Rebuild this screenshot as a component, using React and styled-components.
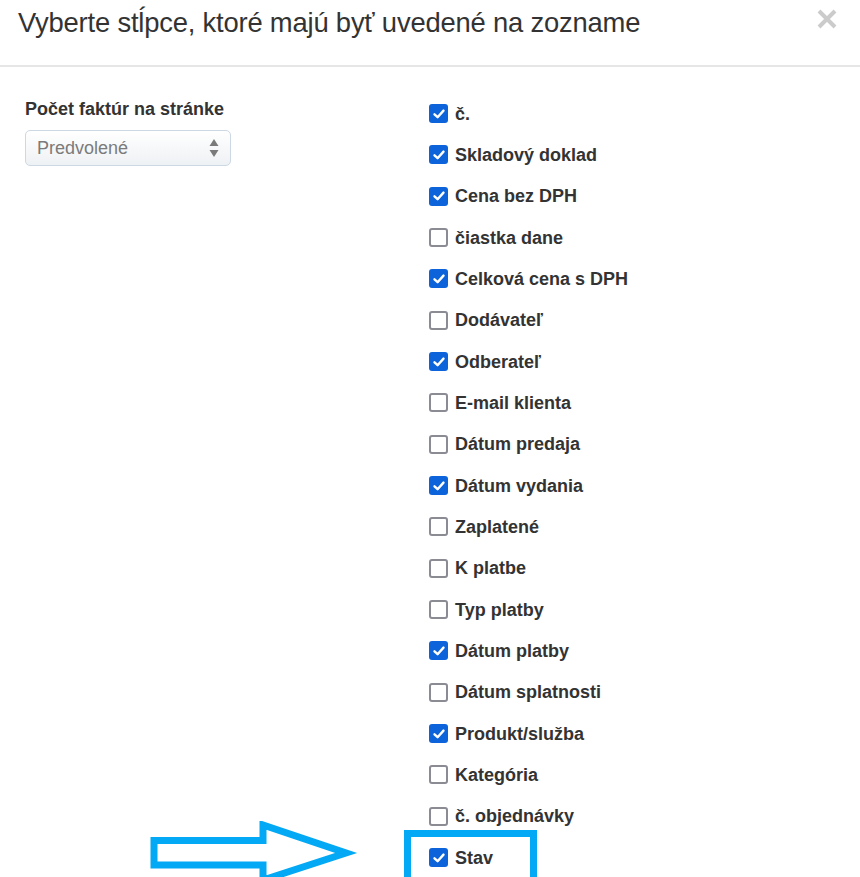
import styled, { createGlobalStyle } from 'styled-components';

const columns = [
  { label: 'č.', checked: true },
  { label: 'Skladový doklad', checked: true },
  { label: 'Cena bez DPH', checked: true },
  { label: 'čiastka dane', checked: false },
  { label: 'Celková cena s DPH', checked: true },
  { label: 'Dodávateľ', checked: false },
  { label: 'Odberateľ', checked: true },
  { label: 'E-mail klienta', checked: false },
  { label: 'Dátum predaja', checked: false },
  { label: 'Dátum vydania', checked: true },
  { label: 'Zaplatené', checked: false },
  { label: 'K platbe', checked: false },
  { label: 'Typ platby', checked: false },
  { label: 'Dátum platby', checked: true },
  { label: 'Dátum splatnosti', checked: false },
  { label: 'Produkt/služba', checked: true },
  { label: 'Kategória', checked: false },
  { label: 'č. objednávky', checked: false },
  { label: 'Stav', checked: true, highlight: true },
];

function Check({ checked }) {
  return (
    <Box $checked={checked}>
      {checked && (
        <svg width="14" height="14" viewBox="0 0 14 14">
          <path d="M2.5 7.3 L5.6 10.2 L11.5 3.6" fill="none" stroke="#fff" strokeWidth="2.4" strokeLinecap="round" strokeLinejoin="round" />
        </svg>
      )}
    </Box>
  );
}

function Arrow() {
  return (
    <ArrowSvg width="210" height="62" viewBox="0 0 210 62">
      <polygon
        points="4,19.5 113,19.5 113,4 196,32 113,59 113,44 4,44"
        fill="#fff"
        stroke="#03a9f4"
        strokeWidth="7"
      />
    </ArrowSvg>
  );
}

function App() {
  return (
    <>
      <GlobalStyle />
      <Modal>
        <Header>
          <Title>Vyberte stĺpce, ktoré majú byť uvedené na zozname</Title>
          <Close aria-label="close">
            <svg width="20" height="20" viewBox="0 0 20 20">
              <path d="M2 2 L18 18 M18 2 L2 18" stroke="#cbcbcb" strokeWidth="4" />
            </svg>
          </Close>
        </Header>
        <Body>
          <Side>
            <FieldLabel>Počet faktúr na stránke</FieldLabel>
            <Select>
              <span>Predvolené</span>
              <Carets>
                <svg width="10" height="20" viewBox="0 0 10 20">
                  <polygon points="5,1 9.5,8 0.5,8" fill="#7a7a7a" />
                  <polygon points="0.5,12 9.5,12 5,19" fill="#7a7a7a" />
                </svg>
              </Carets>
            </Select>
          </Side>
          <List>
            {columns.map((c) =>
              c.highlight ? (
                <Highlight key={c.label}>
                  <Arrow />
                  <Row>
                    <Check checked={c.checked} />
                    <Label>{c.label}</Label>
                  </Row>
                </Highlight>
              ) : (
                <Row key={c.label}>
                  <Check checked={c.checked} />
                  <Label>{c.label}</Label>
                </Row>
              )
            )}
          </List>
        </Body>
      </Modal>
    </>
  );
}

export default App;

const GlobalStyle = createGlobalStyle`
  html, body {
    margin: 0;
    padding: 0;
    background: #fff;
    overflow: hidden;
  }
  body {
    font-family: "Liberation Sans", Arial, sans-serif;
    color: #333;
  }
`;

const Modal = styled.div`
  width: 860px;
  height: 877px;
  overflow: hidden;
  background: #fff;
`;

const Header = styled.div`
  display: flex;
  justify-content: space-between;
  align-items: flex-start;
  height: 65px;
  padding: 0 23px 0 18px;
  border-bottom: 2px solid #e6e6e6;
`;

const Title = styled.h4`
  margin: 6px 0 0;
  font-size: 27.4px;
  font-weight: normal;
  line-height: 34px;
  color: #333;
  letter-spacing: -0.2px;
`;

const Close = styled.div`
  margin-top: 9px;
  width: 20px;
  height: 20px;
`;

const Body = styled.div`
  display: flex;
  padding: 31px 0 0 25px;
`;

const Side = styled.div`
  width: 404px;
  display: flex;
  flex-direction: column;
`;

const FieldLabel = styled.label`
  font-size: 18px;
  font-weight: bold;
  line-height: 22px;
  color: #333;
  margin-bottom: 10px;
`;

const Select = styled.div`
  box-sizing: border-box;
  width: 206px;
  height: 36px;
  display: flex;
  align-items: center;
  justify-content: space-between;
  padding: 0 11px 0 11px;
  border: 1px solid #ccd8e4;
  border-radius: 5px;
  background: linear-gradient(#ffffff, #eef1f4);
  font-size: 18px;
  color: #7b7b7b;
`;

const Carets = styled.span`
  display: flex;
  align-items: center;
`;

const List = styled.div`
  display: flex;
  flex-direction: column;
  margin-top: -5px;
`;

const Row = styled.div`
  display: flex;
  align-items: center;
  gap: 7px;
  height: 41.33px;
`;

const Box = styled.span`
  box-sizing: border-box;
  width: 19px;
  height: 19px;
  border-radius: 3px;
  display: flex;
  align-items: center;
  justify-content: center;
  background: ${(p) => (p.$checked ? '#0d63d9' : '#fff')};
  border: ${(p) => (p.$checked ? 'none' : '2px solid #8b8b94')};
`;

const Label = styled.span`
  font-size: 18px;
  font-weight: bold;
  color: #333;
  line-height: 20px;
`;

const Highlight = styled.div`
  position: relative;
  margin: -7px 0 0 -25px;
  padding: 0 0 0 18px;
  width: 101px;
  border: 7px solid #03a9f4;
  height: 41.33px;
  display: flex;
  align-items: center;
`;

const ArrowSvg = styled.svg`
  position: absolute;
  left: -261px;
  top: -16px;
`;
